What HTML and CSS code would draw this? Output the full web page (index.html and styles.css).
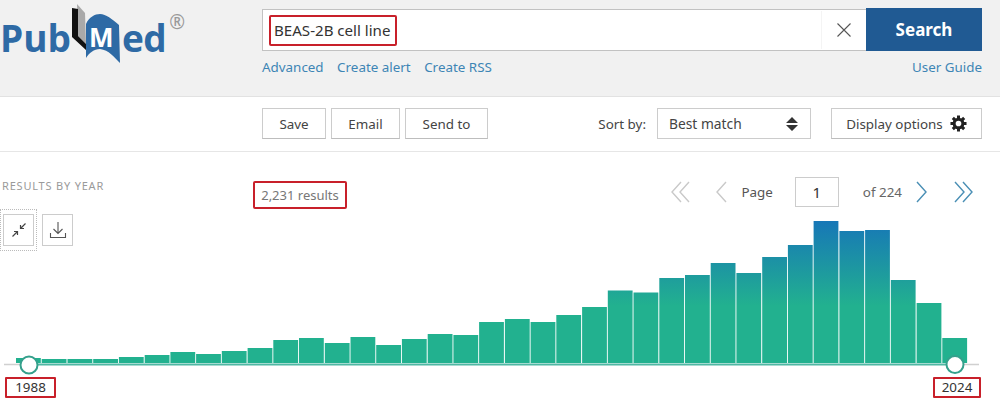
FILE: index.html
```html
<!DOCTYPE html>
<html lang="en">
<head>
<meta charset="utf-8">
<title>PubMed results</title>
<link rel="stylesheet" href="styles.css">
</head>
<body>
<header class="top">
  <div class="logo">
    <span class="logo-word">Pub</span>
    <svg class="logo-book" viewBox="0 0 54 64" width="54" height="64" aria-hidden="true">
      <path d="M9 4 L17 13 L18 44 L10 36 Z" fill="#a9a9a9"/>
      <path d="M4 8 L10 9 L10 36 L18 44 L18 50 L4 37 Z" fill="#111"/>
      <path d="M18 58 L18 24 C21 17 27 14 32 14 C38 14 44 19 51 25 L52 63 C46 57 41 50 32 49 C26 49 21 53 18 58 Z" fill="#2e6aa5"/>
      <text x="21" y="47" class="logo-m">M</text>
    </svg>
    <span class="logo-word logo-end">ed</span>
    <span class="logo-reg">®</span>
  </div>
  <div class="search-col">
    <div class="search-row">
      <div class="search-box">
        <span class="search-term">BEAS-2B cell line</span>
        <span class="clear">
          <svg viewBox="0 0 16 16" width="16" height="16" aria-hidden="true"><path d="M1.5 1.5 L14.5 14.5 M14.5 1.5 L1.5 14.5" stroke="#555" stroke-width="1.1" fill="none"/></svg>
        </span>
      </div>
      <button class="search-btn">Search</button>
    </div>
    <nav class="links">
      <a>Advanced</a><a>Create alert</a><a>Create RSS</a><a class="guide">User Guide</a>
    </nav>
  </div>
</header>

<section class="toolbar">
  <button class="btn btn-save">Save</button>
  <button class="btn btn-email">Email</button>
  <button class="btn btn-send">Send to</button>
  <span class="sort-label">Sort by:</span>
  <div class="select">
    <span>Best match</span>
    <svg viewBox="0 0 12 16" width="12" height="16" aria-hidden="true"><path d="M6 1 L12 7 L0 7 Z M0 9 L12 9 L6 15 Z" fill="#333"/></svg>
  </div>
  <button class="btn btn-display">
    <span>Display options</span>
    <svg viewBox="0 0 18 18" width="17" height="17" aria-hidden="true">
      <g stroke="#222" stroke-width="3.2" fill="none">
        <circle cx="9" cy="9" r="4.6"/>
        <path d="M9 0.5 V4 M9 14 V17.5 M0.5 9 H4 M14 9 H17.5 M3 3 L5.4 5.4 M12.6 12.6 L15 15 M15 3 L12.6 5.4 M5.4 12.6 L3 15"/>
      </g>
    </svg>
  </button>
</section>

<section class="summary">
  <h2 class="by-year">RESULTS BY YEAR</h2>
  <div class="count">2,231 results</div>
  <div class="pager">
    <svg class="pg pg-first" viewBox="0 0 20 22" width="20" height="22" aria-hidden="true"><path d="M10 1 L1 11 L10 21 M18 1 L9 11 L18 21" stroke="#c9c9c9" stroke-width="1.4" fill="none"/></svg>
    <svg class="pg pg-prev" viewBox="0 0 12 22" width="12" height="22" aria-hidden="true"><path d="M11 1 L2 11 L11 21" stroke="#c9c9c9" stroke-width="1.4" fill="none"/></svg>
    <span class="pg-label">Page</span>
    <span class="pg-input">1</span>
    <span class="pg-of">of 224</span>
    <svg class="pg pg-next" viewBox="0 0 12 22" width="12" height="22" aria-hidden="true"><path d="M1 1 L10 11 L1 21" stroke="#4a8fb5" stroke-width="1.4" fill="none"/></svg>
    <svg class="pg pg-last" viewBox="0 0 20 22" width="20" height="22" aria-hidden="true"><path d="M2 1 L11 11 L2 21 M10 1 L19 11 L10 21" stroke="#4a8fb5" stroke-width="1.4" fill="none"/></svg>
  </div>
</section>

<section class="chart">
  <div class="chart-tools">
    <span class="tool-focus">
      <button class="tool">
        <svg viewBox="0 0 16 16" width="16" height="16" aria-hidden="true"><path d="M1.5 14.5 L6 10 M3 9.5 H6.5 V13 M14.5 1.5 L10 6 M9.5 3 V6.5 H13" stroke="#444" stroke-width="1.2" fill="none"/></svg>
      </button>
    </span>
    <button class="tool">
      <svg viewBox="0 0 18 18" width="18" height="18" aria-hidden="true"><path d="M9 1 V12.5 M4.5 8 L9 12.5 L13.5 8 M1.5 12 V16.5 H16.5 V12" stroke="#555" stroke-width="1.1" fill="none"/></svg>
    </button>
  </div>
  <svg class="plot" viewBox="0 209 1000 167" width="1000" height="167" role="img" aria-label="Results by year, 1988 to 2024">
    <defs>
      <linearGradient id="barfill" gradientUnits="userSpaceOnUse" x1="0" y1="221" x2="0" y2="306">
        <stop offset="0" stop-color="#1777b7"/>
        <stop offset="1" stop-color="#22b18f"/>
      </linearGradient>
    </defs>
    <g fill="url(#barfill)">
      <rect x="16" y="358" width="24.8" height="5"/>
      <rect x="41.7" y="359" width="24.8" height="4"/>
      <rect x="67.5" y="359" width="24.8" height="4"/>
      <rect x="93.2" y="359" width="24.8" height="4"/>
      <rect x="118.9" y="357" width="24.8" height="6"/>
      <rect x="144.7" y="355" width="24.8" height="8"/>
      <rect x="170.4" y="352" width="24.8" height="11"/>
      <rect x="196.1" y="354" width="24.8" height="9"/>
      <rect x="221.8" y="351" width="24.8" height="12"/>
      <rect x="247.6" y="348" width="24.8" height="15"/>
      <rect x="273.3" y="340" width="24.8" height="23"/>
      <rect x="299" y="338" width="24.8" height="25"/>
      <rect x="324.8" y="343" width="24.8" height="20"/>
      <rect x="350.5" y="337" width="24.8" height="26"/>
      <rect x="376.2" y="345" width="24.8" height="18"/>
      <rect x="401.9" y="339" width="24.8" height="24"/>
      <rect x="427.7" y="334" width="24.8" height="29"/>
      <rect x="453.4" y="335" width="24.8" height="28"/>
      <rect x="479.1" y="322" width="24.8" height="41"/>
      <rect x="504.9" y="319" width="24.8" height="44"/>
      <rect x="530.6" y="322" width="24.8" height="41"/>
      <rect x="556.3" y="315" width="24.8" height="48"/>
      <rect x="582.1" y="307" width="24.8" height="56"/>
      <rect x="607.8" y="290.5" width="24.8" height="72.5"/>
      <rect x="633.5" y="292.5" width="24.8" height="70.5"/>
      <rect x="659.3" y="278" width="24.8" height="85"/>
      <rect x="685" y="275" width="24.8" height="88"/>
      <rect x="710.7" y="263" width="24.8" height="100"/>
      <rect x="736.4" y="273" width="24.8" height="90"/>
      <rect x="762.2" y="257" width="24.8" height="106"/>
      <rect x="787.9" y="245" width="24.8" height="118"/>
      <rect x="813.6" y="221" width="24.8" height="142"/>
      <rect x="839.4" y="231" width="24.8" height="132"/>
      <rect x="865.1" y="230" width="24.8" height="133"/>
      <rect x="890.8" y="280" width="24.8" height="83"/>
      <rect x="916.6" y="303" width="24.8" height="60"/>
      <rect x="942.3" y="338" width="24.8" height="25"/>
    </g>
    <path d="M4 364.5 H20 M960 364.5 H979" stroke="#d0d0d0" stroke-width="1.5"/>
    <path d="M20 364.5 H960" stroke="#4fb8a4" stroke-width="2"/>
    <circle cx="29" cy="365" r="8.5" fill="#fff" stroke="#35a08c" stroke-width="2"/>
    <circle cx="955" cy="364.5" r="8.5" fill="#fff" stroke="#35a08c" stroke-width="2"/>
  </svg>
  <div class="years">
    <span class="year">1988</span>
    <span class="year">2024</span>
  </div>
</section>
</body>
</html>
```

FILE: styles.css
```css
* { box-sizing: border-box; }
html, body { margin: 0; padding: 0; }
body {
  width: 1000px;
  height: 400px;
  overflow: hidden;
  background: #fff;
  color: #444;
  font-family: "Noto Sans", "Open Sans", sans-serif;
  font-size: 13.4px;
}
button { font: inherit; color: inherit; background: #fff; cursor: pointer; }

/* Header */
.top {
  display: flex;
  height: 97px;
  padding: 8px 18px 0 0;
  background: #f1f1f1;
  border-bottom: 1px solid #e2e2e2;
}
.logo {
  display: flex;
  align-items: flex-start;
  width: 262px;
  flex: none;
  margin-top: -8px;
  color: #2e6aa5;
}
.logo-word {
  margin-top: 14px;
  font-family: "Open Sans", sans-serif;
  font-size: 37px;
  font-weight: 700;
  line-height: 48px;
}
.logo-book { flex: none; margin: 0 -1px 0 -3px; overflow: visible; }
.logo-m {
  fill: #fff;
  font-family: "Open Sans", sans-serif;
  font-size: 26px;
  font-weight: 700;
}
.logo-end { margin-left: 1px; letter-spacing: -0.5px; }
.logo-reg {
  margin: 12px 0 0 3px;
  font-size: 19px;
  line-height: 20px;
  color: #9a9a9a;
}
.search-col { flex: 1; }
.search-row { display: flex; height: 43px; }
.search-box {
  flex: 1;
  display: flex;
  align-items: center;
  justify-content: space-between;
  margin-top: 1px;
  padding-left: 6px;
  background: #fff;
  border: 1px solid #c2c2c2;
  border-right: 0;
}
.search-term {
  padding: 2px 5px 3px 3px;
  border: 2px solid #c8202a;
  border-radius: 2px;
  color: #333;
  font-size: 15.1px;
  line-height: 22px;
}
.clear {
  display: flex;
  align-items: center;
  justify-content: center;
  width: 45px;
  height: 38px;
  border-left: 1px solid #f4f4f4;
}
.search-btn {
  width: 116px;
  border: 0;
  background: #205a93;
  color: #fff;
  font-size: 17px;
  font-weight: 700;
}
.links {
  display: flex;
  gap: 13.5px;
  margin-top: 6px;
  line-height: 20px;
  color: #3d85b5;
}
.guide { margin-left: auto; }

/* Toolbar */
.toolbar {
  display: flex;
  align-items: center;
  height: 55px;
  padding: 0 18px 1px 262px;
  border-bottom: 1px solid #e6e6e6;
}
.btn {
  height: 31px;
  padding: 0;
  border: 1px solid #ccc;
  border-bottom-color: #bdbdbd;
  background: #fff;
}
.btn-save { width: 64px; }
.btn-email { width: 69px; margin-left: 5px; }
.btn-send { width: 83px; margin-left: 5px; }
.sort-label { margin-left: auto; margin-right: 11px; }
.select {
  display: flex;
  align-items: center;
  justify-content: space-between;
  width: 154px;
  height: 31px;
  padding: 0 12px 0 11px;
  border: 1px solid #ccc;
  font-size: 13.8px;
}
.btn-display {
  display: flex;
  align-items: center;
  justify-content: center;
  gap: 7px;
  width: 151px;
  margin-left: 20px;
}

/* Results summary */
.summary {
  display: flex;
  align-items: flex-start;
  height: 57px;
  padding: 25px 27px 0 2px;
}
.by-year {
  width: 251px;
  flex: none;
  margin: 1px 0 0;
  color: #9a9a9a;
  font-size: 11px;
  font-weight: 400;
  letter-spacing: 0.8px;
  line-height: 16px;
}
.count {
  width: 94px;
  height: 28px;
  margin-top: 4px;
  border: 2px solid #c8202a;
  border-radius: 2px;
  color: #777;
  font-size: 13px;
  line-height: 24px;
  text-align: center;
}
.pager {
  display: flex;
  align-items: center;
  margin-left: auto;
  height: 30px;
}
.pg-first { margin-right: 24px; }
.pg-label { margin-left: 14px; color: #555; }
.pg-input {
  width: 44px;
  height: 30px;
  margin: 0 24px 0 22px;
  border: 1px solid #ccc;
  color: #333;
  font-size: 15px;
  line-height: 28px;
  text-align: center;
}
.pg-of { color: #666; }
.pg-next { margin-left: 14px; }
.pg-last { margin-left: 25px; }

/* Chart */
.chart { position: relative; }
.plot { display: block; }
.chart-tools {
  position: absolute;
  top: 0;
  left: 0;
  display: flex;
  align-items: center;
  gap: 5px;
}
.tool-focus {
  display: block;
  padding: 4px 2px;
  border: 1px dotted #bbb;
}
.tool {
  display: flex;
  align-items: center;
  justify-content: center;
  width: 31px;
  height: 32px;
  padding: 0;
  border: 1px solid #ccc;
}
.years {
  display: flex;
  justify-content: space-between;
  padding: 1px 19px 0 5px;
}
.year {
  width: 51px;
  height: 21px;
  border: 2px solid #c8202a;
  border-radius: 1px;
  color: #333;
  font-size: 13.4px;
  line-height: 17px;
  text-align: center;
}
.year:last-child { width: 48px; }
```
